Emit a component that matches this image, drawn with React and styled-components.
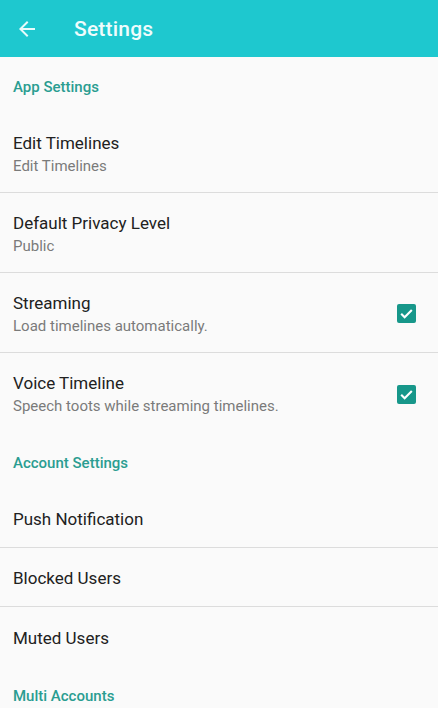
import React from "react";
import styled, { createGlobalStyle } from "styled-components";

const Global = createGlobalStyle`
  html, body {
    margin: 0;
    padding: 0;
    background: #fafafa;
    font-family: Roboto, "Noto Sans", sans-serif;
  }
`;

const sections = [
  {
    title: "App Settings",
    items: [
      { label: "Edit Timelines", sub: "Edit Timelines" },
      { label: "Default Privacy Level", sub: "Public" },
      { label: "Streaming", sub: "Load timelines automatically.", checked: true },
      { label: "Voice Timeline", sub: "Speech toots while streaming timelines.", checked: true },
    ],
  },
  {
    title: "Account Settings",
    items: [
      { label: "Push Notification" },
      { label: "Blocked Users" },
      { label: "Muted Users" },
    ],
  },
  { title: "Multi Accounts", items: [] },
];

const BackArrow = () => (
  <svg width="24" height="24" viewBox="0 0 24 24" fill="#e8fbfb">
    <path d="M20 11H7.83l5.59-5.59L12 4l-8 8 8 8 1.41-1.41L7.83 13H20v-2z" />
  </svg>
);

const Settings = () => {
  return (
    <Page>
      <Global />
      <AppBar>
        <BackArrow />
        <Title>Settings</Title>
      </AppBar>
      {sections.map((section) => (
        <section key={section.title}>
          <Category>{section.title}</Category>
          {section.items.map((item, i) => (
            <Row
              key={item.label}
              $tall={!!item.sub}
              $last={i === section.items.length - 1}
            >
              <Texts>
                <Label>{item.label}</Label>
                {item.sub && <Sub>{item.sub}</Sub>}
              </Texts>
              {item.checked && (
                <Check>
                  <svg width="15" height="15" viewBox="0 0 24 24">
                    <path
                      d="M3.5 12.5l5.5 5.5L20.5 6.5"
                      fill="none"
                      stroke="#fff"
                      strokeWidth="3.4"
                    />
                  </svg>
                </Check>
              )}
            </Row>
          ))}
        </section>
      ))}
    </Page>
  );
};

const Page = styled.div`
  width: 438px;
  height: 708px;
  overflow: hidden;
  background: #fafafa;
`;

const AppBar = styled.header`
  height: 57px;
  background: #1ec8cf;
  display: flex;
  align-items: center;
  padding-left: 15px;
  box-sizing: border-box;
`;

const Title = styled.h1`
  margin: 0 0 0 35px;
  font-size: 21px;
  font-weight: 500;
  color: #effcfc;
  letter-spacing: 0.2px;
`;

const Category = styled.div`
  height: 56px;
  display: flex;
  align-items: center;
  padding: 3px 13px 0;
  box-sizing: border-box;
  font-size: 15px;
  font-weight: 500;
  color: #2a9d91;
`;

const Row = styled.div`
  height: ${(p) => (p.$tall ? "80px" : "59px")};
  box-sizing: border-box;
  display: flex;
  align-items: center;
  justify-content: space-between;
  padding: 2px 22px 0 13px;
  border-bottom: ${(p) => (p.$last ? "none" : "1px solid #dcdcdc")};
`;

const Texts = styled.div`
  display: flex;
  flex-direction: column;
  gap: 4px;
`;

const Label = styled.div`
  font-size: 17px;
  line-height: 20px;
  color: #212121;
`;

const Sub = styled.div`
  font-size: 15px;
  line-height: 18px;
  color: #7a7a7a;
`;

const Check = styled.div`
  width: 19px;
  height: 19px;
  border-radius: 2px;
  background: #17978a;
  display: flex;
  align-items: center;
  justify-content: center;
`;

export default Settings;
